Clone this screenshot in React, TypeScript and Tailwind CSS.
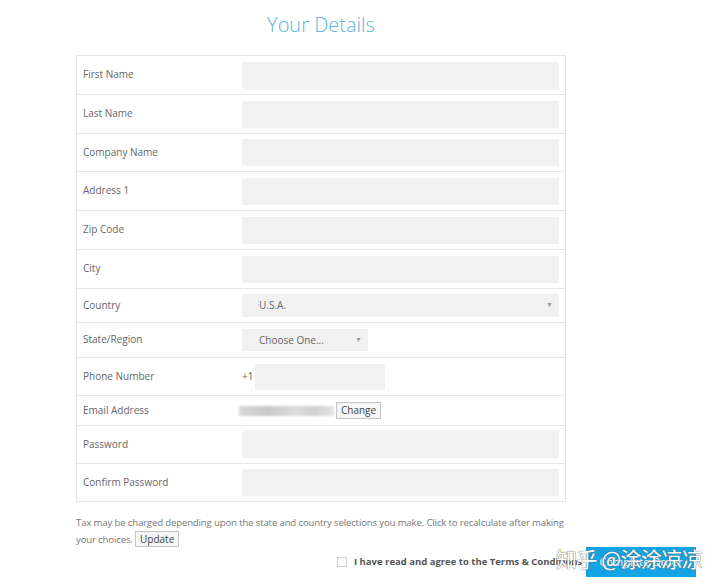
import React from "react";

const font = { fontFamily: '"Open Sans", "Noto Sans", sans-serif' };

function Row({ label, h, children, last }: { label: string; h: string; children?: React.ReactNode; last?: boolean }) {
  return (
    <div className={`flex items-center ${h} ${last ? "" : "border-b border-[#e6e6e6]"}`}>
      <div className="w-[165px] pl-[6px] text-[10px] text-[#666] -mt-[1px]">{label}</div>
      <div className="flex-1 pr-[6px] flex items-center">{children}</div>
    </div>
  );
}

const Input = () => <div className="h-[27px] w-full bg-[#f1f1f1]" />;

export default function App() {
  return (
    <div className="relative w-[720px] h-[588px] bg-white overflow-hidden" style={font}>
      <div className="ml-[76px] w-[490px]">
        <div className="h-[55px] flex items-center justify-center text-[20px] font-light text-[#5ab4dc] pb-[6px]">Your Details</div>
        <div className="border border-[#e6e6e6] border-r-[#e0e0e0]">
          <Row label="First Name" h="h-[39px]"><Input /></Row>
          <Row label="Last Name" h="h-[39px]"><Input /></Row>
          <Row label="Company Name" h="h-[38px]"><Input /></Row>
          <Row label="Address 1" h="h-[39px]"><Input /></Row>
          <Row label="Zip Code" h="h-[39px]"><Input /></Row>
          <Row label="City" h="h-[39px]"><Input /></Row>
          <Row label="Country" h="h-[34px]">
            <div className="h-[23px] w-full bg-[#f1f1f1] flex items-center justify-between pl-[17px] pr-[6px] text-[10px] text-[#666]">
              <span>U.S.A.</span>
              <span className="text-[7px] text-[#999]">▼</span>
            </div>
          </Row>
          <Row label="State/Region" h="h-[35px]">
            <div className="h-[22px] w-[126px] bg-[#f1f1f1] flex items-center justify-between pl-[17px] pr-[6px] text-[10px] text-[#666]">
              <span>Choose One...</span>
              <span className="text-[7px] text-[#999]">▼</span>
            </div>
          </Row>
          <Row label="Phone Number" h="h-[38px]">
            <span className="text-[10px] text-[#666] w-[13px]">+1</span>
            <div className="h-[26px] w-[130px] bg-[#f1f1f1]" />
          </Row>
          <Row label="Email Address" h="h-[30px]">
            <div className="-ml-[3px] h-[10px] w-[95px] bg-[linear-gradient(90deg,#d8d8d8,#c8c8c8_30%,#dcdcdc_60%,#cfcfcf_80%,#e6e6e6)] blur-[1px]" />
            <div className="ml-[2px] h-[17px] px-[4px] border border-[#c4c4c4] bg-[#f6f6f6] text-[10px] text-[#444] flex items-center">Change</div>
          </Row>
          <Row label="Password" h="h-[38px]"><Input /></Row>
          <Row label="Confirm Password" h="h-[37px]" last><Input /></Row>
        </div>
        <div className="mt-[13px] text-[9.6px] leading-[16px] text-[#777] whitespace-nowrap tracking-[-0.15px]">
          Tax may be charged depending upon the state and country selections you make. Click to recalculate after making
          <br />
          your choices.{" "}
          <span className="inline-block border border-[#c4c4c4] bg-[#f6f6f6] px-[4px] leading-[14px] text-[10px] text-[#444] tracking-normal">Update</span>
        </div>
      </div>
      <div className="absolute left-[337px] top-[547px] flex items-center h-[30px]">
        <div className="w-[10px] h-[10px] border border-[#ccc] bg-white" />
        <span className="ml-[7px] text-[9.5px] font-bold text-[#555]">I have read and agree to the Terms &amp; Conditions</span>
      </div>
      <div className="absolute left-[586px] top-[547px] w-[110px] h-[30px] bg-[#14a3e3] flex items-center justify-center text-[11px] text-white">
        Complete Order
      </div>
      <div
        className="absolute left-[556px] top-[543px] text-[21px] text-white whitespace-nowrap tracking-[-0.5px]"
        style={{ fontFamily: '"Noto Sans CJK SC", "Noto Sans", sans-serif', textShadow: "0 0 1px #666, 0 0 1px #666" }}
      >
        知乎 @涂涂凉凉
      </div>
    </div>
  );
}
